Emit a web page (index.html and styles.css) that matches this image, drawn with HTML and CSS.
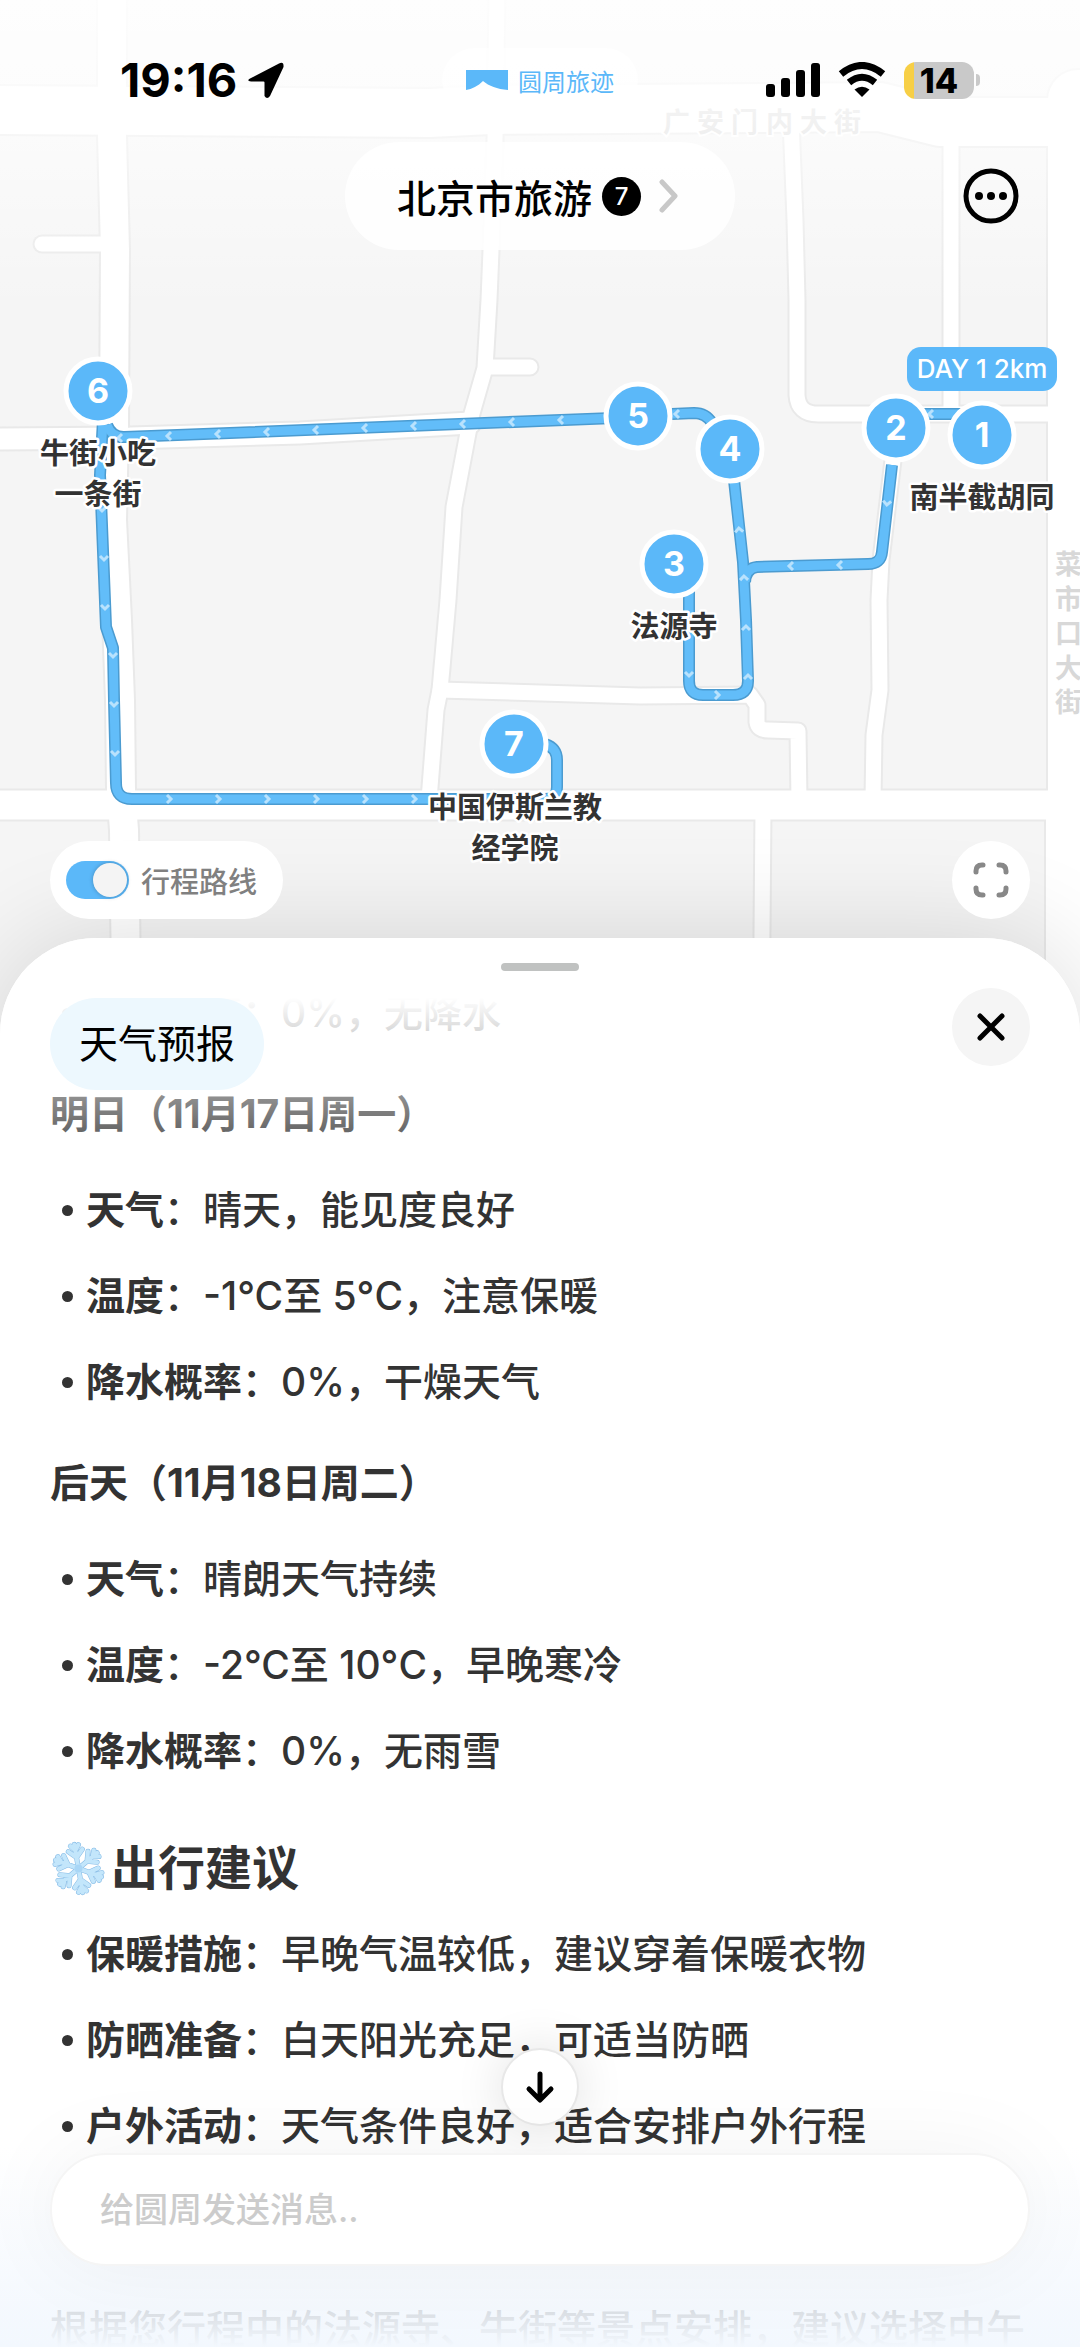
FILE: index.html
```html
<!DOCTYPE html>
<html lang="zh-CN">
<head>
    <meta charset="UTF-8">
    <meta name="viewport" content="width=device-width, initial-scale=1.0">
    <title>圆周旅迹 - 北京市旅游</title>
    <link rel="stylesheet" href="styles.css">
</head>
<body>
    <main class="app">
        <section class="map">
            <svg class="map-canvas" viewBox="0 0 1080 1040" role="img" aria-label="行程地图">
                <defs>
                    <g id="route" fill="none" stroke-linejoin="round">
                        <path d="M985 414H896M892 465L882 552Q881 564 868 564L757 567Q746 568 745 582"/>
                        <path d="M689 590V681Q689 695 703 695H733Q748 695 748 681L746 620L743 562L734 480"/>
                        <path d="M730 445L712 423Q706 413 694 413L672 414M640 417L125 437Q112 438 107 425"/>
                        <path d="M103 420L100 475L106 627L113 648L114 700L116 783Q116 799 132 799H545Q557 799 557 787V760Q557 748 545 744"/>
                    </g>
                    <path id="chev" d="M2 -4L-2 0L2 4"/>
                    <linearGradient id="haze" x1="0" y1="0" x2="0" y2="1">
                        <stop offset="0" stop-color="#fff" stop-opacity=".9"/>
                        <stop offset=".3" stop-color="#fff" stop-opacity=".75"/>
                        <stop offset="1" stop-color="#fff" stop-opacity="0"/>
                    </linearGradient>
                </defs>

                <rect class="land" width="1080" height="1040"/>
                <g class="road-casing">
                    <path stroke-width="52" d="M-10 110L430 113L490 110L880 107L940 122L1090 122"/>
                    <path stroke-width="32" d="M112 -10L112 136L115 250L114 430L112 520L117 620L120 700L121 790L124 830L127 1050"/>
                    <path stroke-width="19" d="M42 244H112"/>
                    <path stroke-width="25" d="M-10 439L130 438L300 433L470 423"/>
                    <path stroke-width="19" d="M497 -10L495 140L491 250L489 300L485 368L471 417L454 507L448 600L440 690L436 710L429 800M485 367H530"/>
                    <path stroke-width="19" d="M440 690L640 696L750 695L757 705V722Q758 730 768 730L798 731L799 800"/>
                    <path stroke-width="33" d="M-10 805L300 805L1090 805"/>
                    <path stroke-width="19" d="M791 120L795 220L797 300V395Q798 414 818 414H1060"/>
                    <path stroke-width="19" d="M951 130V410"/>
                    <path stroke-width="19" d="M897 414L893 460L881 560L879 600L880 690L874 735L873 800"/>
                    <path stroke-width="19" d="M763 810L761 1050"/>
                    <path stroke-width="64" d="M1078 100V790L1076 820V1050"/>
                </g>
                <g class="road">
                    <path stroke-width="48" d="M-10 110L430 113L490 110L880 107L940 122L1090 122"/>
                    <path stroke-width="28" d="M112 -10L112 136L115 250L114 430L112 520L117 620L120 700L121 790L124 830L127 1050"/>
                    <path stroke-width="15" d="M42 244H112"/>
                    <path stroke-width="21" d="M-10 439L130 438L300 433L470 423"/>
                    <path stroke-width="15" d="M497 -10L495 140L491 250L489 300L485 368L471 417L454 507L448 600L440 690L436 710L429 800M485 367H530"/>
                    <path stroke-width="15" d="M440 690L640 696L750 695L757 705V722Q758 730 768 730L798 731L799 800"/>
                    <path stroke-width="29" d="M-10 805L300 805L1090 805"/>
                    <path stroke-width="15" d="M791 120L795 220L797 300V395Q798 414 818 414H1060"/>
                    <path stroke-width="15" d="M951 130V410"/>
                    <path stroke-width="15" d="M897 414L893 460L881 560L879 600L880 690L874 735L873 800"/>
                    <path stroke-width="15" d="M763 810L761 1050"/>
                    <path stroke-width="60" d="M1078 100V790L1076 820V1050"/>
                </g>

                <g class="street">
                    <text x="663 697 731 766 800 834" y="132">广安门内大街</text>
                    <text x="1055 1055 1055 1055 1055" y="574 609 643 678 712">菜市口大街</text>
                </g>
                <rect width="1080" height="310" fill="url(#haze)"/>

                <use class="route-edge" href="#route"/>
                <use class="route-fill" href="#route"/>
                <g class="chevrons">
                    <use href="#chev" transform="translate(120 438)"/>
                    <use href="#chev" transform="translate(169 436)"/>
                    <use href="#chev" transform="translate(218 434)"/>
                    <use href="#chev" transform="translate(267 432)"/>
                    <use href="#chev" transform="translate(316 430)"/>
                    <use href="#chev" transform="translate(365 428)"/>
                    <use href="#chev" transform="translate(414 426)"/>
                    <use href="#chev" transform="translate(463 424)"/>
                    <use href="#chev" transform="translate(512 422)"/>
                    <use href="#chev" transform="translate(561 420)"/>
                    <use href="#chev" transform="translate(677 414)"/>
                    <use href="#chev" transform="translate(931 414)"/>
                    <use href="#chev" transform="translate(840 565)"/>
                    <use href="#chev" transform="translate(791 566)"/>
                    <use href="#chev" transform="translate(887 503) rotate(-85)"/>
                    <use href="#chev" transform="translate(689 674) rotate(-90)"/>
                    <use href="#chev" transform="translate(102 509) rotate(-90)"/>
                    <use href="#chev" transform="translate(104 558) rotate(-90)"/>
                    <use href="#chev" transform="translate(105 607) rotate(-90)"/>
                    <use href="#chev" transform="translate(113 655) rotate(-90)"/>
                    <use href="#chev" transform="translate(114 704) rotate(-90)"/>
                    <use href="#chev" transform="translate(115 753) rotate(-90)"/>
                    <use href="#chev" transform="translate(739 530) rotate(85)"/>
                    <use href="#chev" transform="translate(744 578) rotate(88)"/>
                    <use href="#chev" transform="translate(746 628) rotate(90)"/>
                    <use href="#chev" transform="translate(748 677) rotate(90)"/>
                    <use href="#chev" transform="translate(717 695) rotate(180)"/>
                    <use href="#chev" transform="translate(169 799) rotate(180)"/>
                    <use href="#chev" transform="translate(218 799) rotate(180)"/>
                    <use href="#chev" transform="translate(267 799) rotate(180)"/>
                    <use href="#chev" transform="translate(316 799) rotate(180)"/>
                    <use href="#chev" transform="translate(365 799) rotate(180)"/>
                    <use href="#chev" transform="translate(414 799) rotate(180)"/>
                </g>

                <g class="pin">
                    <circle cx="98" cy="391" r="32"/><text x="98" y="403">6</text>
                    <circle cx="638" cy="416" r="32"/><text x="638" y="428">5</text>
                    <circle cx="730" cy="449" r="32"/><text x="730" y="461">4</text>
                    <circle cx="674" cy="564" r="32"/><text x="674" y="576">3</text>
                    <circle cx="514" cy="744" r="32"/><text x="514" y="756">7</text>
                    <circle cx="896" cy="428" r="32"/><text x="896" y="440">2</text>
                    <circle cx="982" cy="435" r="32"/><text x="982" y="447">1</text>
                </g>
                <g class="place">
                    <text x="98" y="464">牛街小吃</text>
                    <text x="98" y="505">一条街</text>
                    <text x="674" y="637">法源寺</text>
                    <text x="982" y="508">南半截胡同</text>
                    <text x="515" y="818">中国伊斯兰教</text>
                    <text x="515" y="859">经学院</text>
                </g>
                <g class="day">
                    <rect x="907" y="347" width="150" height="44" rx="14"/>
                    <text x="982" y="378">DAY 1 2km</text>
                </g>
            </svg>

            <header class="map-top">
                <div class="status">
                    <div class="status-left">
                        <span class="clock">19:16</span>
                        <svg width="38" height="38" viewBox="0 0 38 38"><path d="M3 17.500L32 2.500Q37 0 36.500 6L23 35Q20 39 17.500 35V21.500Q17.500 20.500 16.500 20.500H4Q-1 20 3 17.500Z"/></svg>
                    </div>
                    <div class="brand">
                        <svg width="42" height="20" viewBox="0 0 42 20"><path d="M0 0H42V20C31 19 23 16 17 11C12 16 6 19 0 20Z"/></svg>
                        <span>圆周旅迹</span>
                    </div>
                    <div class="status-right">
                        <svg width="54" height="34" viewBox="0 0 54 34"><rect y="21" width="9" height="13" rx="3"/><rect x="15" y="15" width="9" height="19" rx="3"/><rect x="30" y="7" width="9" height="27" rx="3"/><rect x="45" width="9" height="34" rx="3"/></svg>
                        <svg class="wifi" width="48" height="36" viewBox="0 0 48 36"><path d="M3 12Q24 -5 45 12M11 20.500Q24 10 37 20.500" fill="none" stroke="#000" stroke-width="7"/><path d="M24 35L16.500 27.500Q24 22 31.500 27.500Z"/></svg>
                        <div class="battery"><span>14</span></div>
                    </div>
                </div>
                <div class="topbar">
                    <button class="trip" type="button">
                        <span>北京市旅游</span>
                        <span class="count">7</span>
                        <svg width="20" height="34" viewBox="0 0 20 34"><path d="M3 3L16 17L3 31" fill="none" stroke="#c8c8c8" stroke-width="5" stroke-linecap="round" stroke-linejoin="round"/></svg>
                    </button>
                    <button class="more" type="button" aria-label="更多">
                        <svg width="58" height="58" viewBox="0 0 58 58"><circle cx="29" cy="29" r="25" fill="none" stroke="#000" stroke-width="5"/><circle cx="17" cy="29" r="4"/><circle cx="29" cy="29" r="4"/><circle cx="41" cy="29" r="4"/></svg>
                    </button>
                </div>
            </header>

            <div class="map-tools">
                <label class="route-toggle" for="routeSwitch">
                    <input id="routeSwitch" type="checkbox" checked>
                    行程路线
                </label>
                <button class="round-btn" type="button" aria-label="全屏">
                    <svg width="36" height="36" viewBox="0 0 36 36"><path d="M3 10V9Q3 3 9 3H10M26 3H27Q33 3 33 9V10M33 26V27Q33 33 27 33H26M10 33H9Q3 33 3 27V26" fill="none" stroke="#888" stroke-width="5" stroke-linecap="round"/></svg>
                </button>
            </div>
        </section>

        <section class="sheet">
            <div class="content">
                <ul>
                    <li><strong>降水概率</strong>：0%，无降水</li>
                </ul>
                <h3>明日（11月17日周一）</h3>
                <ul>
                    <li><strong>天气</strong>：晴天，能见度良好</li>
                    <li><strong>温度</strong>：-1°C至 5°C，注意保暖</li>
                    <li><strong>降水概率</strong>：0%，干燥天气</li>
                </ul>
                <h3>后天（11月18日周二）</h3>
                <ul>
                    <li><strong>天气</strong>：晴朗天气持续</li>
                    <li><strong>温度</strong>：-2°C至 10°C，早晚寒冷</li>
                    <li><strong>降水概率</strong>：0%，无雨雪</li>
                </ul>
                <h2>
                    <svg width="57" height="57" viewBox="-28 -28 56 56" aria-hidden="true">
                        <defs>
                            <g id="arm">
                                <path d="M0 0V-24M0 -11L-7 -18M0 -11L7 -18M0 -18L-4 -23M0 -18L4 -23"/>
                            </g>
                            <g id="flake" fill="none" stroke-linecap="round" stroke-linejoin="round">
                                <use href="#arm" transform="rotate(-10)"/>
                                <use href="#arm" transform="rotate(50)"/>
                                <use href="#arm" transform="rotate(110)"/>
                                <use href="#arm" transform="rotate(170)"/>
                                <use href="#arm" transform="rotate(230)"/>
                                <use href="#arm" transform="rotate(290)"/>
                            </g>
                        </defs>
                        <use href="#flake" stroke="#86bbe6" stroke-width="5"/>
                        <use href="#flake" stroke="#c3e6fb" stroke-width="4"/>
                        <circle r="4" fill="#a9d6f6"/>
                    </svg>
                    出行建议
                </h2>
                <ul>
                    <li><strong>保暖措施</strong>：早晚气温较低，建议穿着保暖衣物</li>
                    <li><strong>防晒准备</strong>：白天阳光充足，可适当防晒</li>
                    <li><strong>户外活动</strong>：天气条件良好，适合安排户外行程</li>
                </ul>
                <p>根据您行程中的法源寺、牛街等景点安排，建议选择中午</p>
            </div>

            <div class="sheet-head">
                <span class="handle"></span>
                <span class="topic">天气预报</span>
                <button class="round-btn close" type="button" aria-label="关闭">
                    <svg width="32" height="32" viewBox="0 0 32 32"><path d="M5 5L27 27M27 5L5 27" stroke="#000" stroke-width="5" stroke-linecap="round"/></svg>
                </button>
            </div>
        </section>

        <form class="composer">
            <button class="scroll-down" type="button" aria-label="滚动到底部">
                <svg width="32" height="36" viewBox="0 0 32 36"><path d="M16 5V30M5 20L16 31L27 20" fill="none" stroke="#000" stroke-width="5" stroke-linecap="round" stroke-linejoin="round"/></svg>
            </button>
            <input type="text" aria-label="消息" placeholder="给圆周发送消息..">
        </form>
    </main>
</body>
</html>
```

FILE: styles.css
```css
* {
    box-sizing: border-box;
}
body {
    margin: 0;
    font-family: Inter, "Noto Sans CJK SC", sans-serif;
    color: #333;
    background-color: #fff;
}
button {
    padding: 0;
    border: none;
    font: inherit;
    color: #000;
    cursor: pointer;
}
svg {
    display: block;
    flex-shrink: 0;
}
.app {
    position: relative;
    display: flex;
    flex-direction: column;
    height: 100vh;
    overflow: hidden;
}

/* map */
.map {
    position: relative;
    flex-shrink: 0;
}
.map-canvas {
    width: 100%;
    height: auto;
}
.land {
    fill: #f5f5f5;
}
.road,
.road-casing {
    fill: none;
    stroke: #fff;
    stroke-linecap: round;
    stroke-linejoin: round;
}
.road-casing {
    stroke: #e9e9e9;
}
.street {
    fill: #d8d8d8;
    stroke: #fff;
    stroke-width: 4;
    paint-order: stroke;
    font-size: 27px;
    font-weight: 700;
}
.route-edge {
    stroke: #4b9bd0;
    stroke-width: 12;
}
.route-fill {
    stroke: #62bdf9;
    stroke-width: 9;
}
.chevrons {
    fill: none;
    stroke: #b9e2fd;
    stroke-width: 3;
}
.pin circle {
    fill: #5bb8f9;
    stroke: #fff;
    stroke-width: 5;
}
.pin text {
    fill: #fff;
    font-size: 34px;
    font-weight: 700;
    text-anchor: middle;
}
.place text {
    fill: #333;
    stroke: #fff;
    stroke-width: 5;
    stroke-linejoin: round;
    paint-order: stroke;
    font-size: 29px;
    font-weight: 700;
    text-anchor: middle;
}
.day rect {
    fill: #5bb8f9;
}
.day text {
    fill: #fff;
    font-size: 26px;
    font-weight: 500;
    text-anchor: middle;
}

/* status bar and title */
.map-top {
    position: absolute;
    top: 0;
    left: 0;
    right: 0;
    padding-top: 48px;
}
.status,
.topbar {
    display: grid;
    grid-template-columns: 1fr auto 1fr;
    align-items: center;
}
.status {
    height: 64px;
    color: #000;
}
.status-left {
    display: flex;
    align-items: center;
    gap: 10px;
    padding-left: 120px;
}
.clock {
    font-size: 47px;
    line-height: 64px;
    font-weight: 700;
}
.brand {
    display: flex;
    align-items: center;
    gap: 10px;
    height: 64px;
    padding: 0 24px;
    border-radius: 32px;
    background-color: rgba(255, 255, 255, 0.7);
    color: #5bb8f9;
    fill: #5bb8f9;
    font-size: 24px;
}
.status-right {
    display: flex;
    align-items: center;
    justify-content: flex-end;
    gap: 18px;
    padding-right: 106px;
}
.battery {
    position: relative;
    width: 70px;
    height: 37px;
    border-radius: 12px;
    background: linear-gradient(90deg, #f7cf46 10px, #c9c9c9 10px);
    text-align: center;
    font-size: 34px;
    line-height: 37px;
    font-weight: 800;
}
.battery::after {
    content: "";
    position: absolute;
    left: 72px;
    top: 12px;
    width: 4px;
    height: 12px;
    border-radius: 0 4px 4px 0;
    background-color: #c9c9c9;
}
.topbar {
    margin-top: 30px;
}
.trip {
    grid-column: 2;
    display: flex;
    align-items: center;
    gap: 10px;
    height: 108px;
    padding: 0 56px 0 52px;
    border-radius: 54px;
    background-color: rgba(255, 255, 255, 0.85);
    font-size: 39px;
    font-weight: 500;
}
.count {
    width: 39px;
    height: 39px;
    margin-right: 8px;
    border-radius: 50%;
    background-color: #000;
    color: #fff;
    font-size: 24px;
    line-height: 39px;
    text-align: center;
}
.more {
    justify-self: end;
    margin-right: 60px;
    background: none;
}

.map-tools {
    position: absolute;
    z-index: 1;
    left: 0;
    right: 0;
    bottom: 121px;
    display: flex;
    justify-content: space-between;
    padding: 0 50px;
}
.route-toggle {
    display: flex;
    align-items: center;
    gap: 12px;
    height: 78px;
    padding: 0 26px 0 16px;
    border-radius: 39px;
    background-color: #fff;
    color: #808080;
    font-size: 29px;
    font-weight: 500;
}
.route-toggle input {
    appearance: none;
    display: flex;
    width: 63px;
    height: 38px;
    margin: 0;
    padding: 2px;
    border-radius: 19px;
    background-color: #ddd;
}
.route-toggle input::before {
    content: "";
    width: 34px;
    height: 34px;
    border-radius: 50%;
    background-color: #f4f4f4;
    box-shadow: 0 0 4px rgba(0, 0, 0, 0.25);
}
.route-toggle input:checked {
    justify-content: flex-end;
    background-color: #5bb8f9;
}
.round-btn {
    display: flex;
    align-items: center;
    justify-content: center;
    width: 78px;
    height: 78px;
    border-radius: 50%;
    background-color: #fff;
}

/* bottom sheet */
.sheet {
    position: relative;
    flex: 1;
    margin-top: -102px;
    border-radius: 96px 96px 0 0;
    background-color: #fff;
    box-shadow: 0 0 110px rgba(0, 0, 0, 0.14);
}
.sheet-head {
    position: absolute;
    top: 0;
    left: 0;
    right: 0;
    display: flex;
    align-items: flex-start;
    justify-content: space-between;
    height: 240px;
    padding: 50px 50px 0;
    border-radius: 96px 96px 0 0;
    background: linear-gradient(#fff 60px, rgba(255, 255, 255, 0));
}
.handle {
    position: absolute;
    top: 25px;
    left: calc(50% - 39px);
    width: 78px;
    height: 8px;
    border-radius: 4px;
    background-color: #c0c2c1;
}
.topic {
    margin-top: 10px;
    padding: 0 29px;
    border-radius: 46px;
    background-color: #edf8fe;
    color: #000;
    font-size: 39px;
    line-height: 92px;
}
.close {
    background-color: #f5f5f5;
}
.content {
    padding: 45px 50px 0;
    font-size: 39px;
    line-height: 60px;
    font-weight: 500;
}
.content ul {
    display: flex;
    flex-direction: column;
    gap: 26px;
    margin: 0;
    padding: 0 0 0 12px;
    list-style: none;
}
.content li {
    display: flex;
    align-items: center;
}
.content li::before {
    content: "";
    width: 11px;
    height: 11px;
    margin-right: 13px;
    border-radius: 50%;
    background-color: #333;
}
.content strong {
    font-weight: 700;
}
.content h3 {
    margin: 41px 0 36px;
    font-size: 39px;
    font-weight: 700;
}
.content h2 {
    display: flex;
    align-items: center;
    gap: 4px;
    margin: 52px 0 21px;
    font-size: 47px;
    line-height: 70px;
    font-weight: 700;
}
.content p {
    margin: 143px 0 0;
}

/* message box */
.composer {
    position: absolute;
    left: 0;
    right: 0;
    bottom: 0;
    padding: 0 50px 81px;
    background: linear-gradient(rgba(243, 248, 254, 0), rgba(243, 248, 254, 0.86) 80%, #f3f8fe) bottom / 100% 200px no-repeat;
}
.scroll-down {
    display: flex;
    align-items: center;
    justify-content: center;
    width: 78px;
    height: 78px;
    margin: 0 auto 27px;
    border: 2px solid #e8e8e8;
    border-radius: 50%;
    background-color: #fff;
    box-shadow: 0 0 50px rgba(0, 0, 0, 0.12);
}
.composer input {
    display: block;
    width: 100%;
    height: 113px;
    padding: 0 48px;
    border: 2px solid #f5f5f5;
    border-radius: 57px;
    background-color: #fff;
    box-shadow: 0 0 90px rgba(0, 0, 0, 0.05);
    font-family: inherit;
    font-size: 34px;
    font-weight: 500;
    color: #333;
}
.composer input::placeholder {
    color: #ccc;
}
```
